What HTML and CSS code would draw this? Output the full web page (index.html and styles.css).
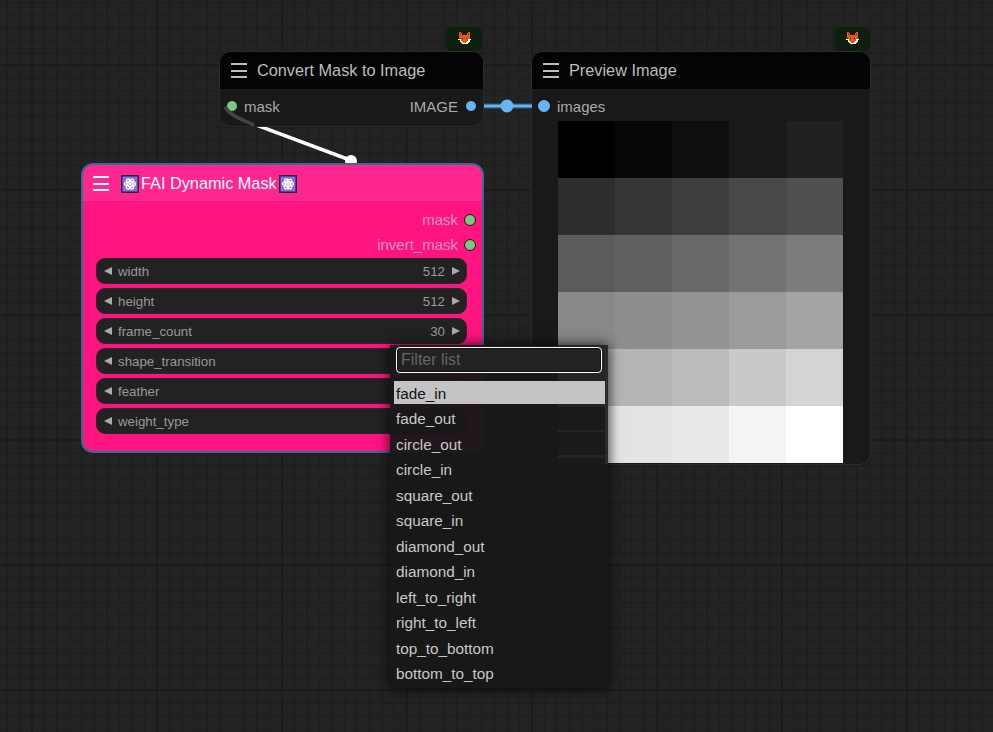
FILE: index.html
```html
<!DOCTYPE html>
<html lang="en">
<head>
<meta charset="utf-8">
<title>Graph</title>
<link rel="stylesheet" href="styles.css">
</head>
<body>
<main class="canvas">
  <svg class="links" width="993" height="732" viewBox="0 0 993 732">
    <path class="link-white" d="M248 122 L350 160"/>
    <circle class="link-dot-white" cx="351" cy="161" r="6"/>
  </svg>

  <div class="badge badge-a"><svg class="fox"><use href="#fox"/></svg></div>
  <div class="badge badge-b"><svg class="fox"><use href="#fox"/></svg></div>

  <section class="node node-convert">
    <header class="node-title"><span class="burger"><i></i><i></i><i></i></span><span>Convert Mask to Image</span></header>
    <div class="slot-row">
      <span class="slot-left"><b class="dot dot-green"></b>mask</span>
      <span class="slot-right">IMAGE<b class="dot dot-blue"></b></span>
    </div>
  </section>

  <section class="node node-preview">
    <header class="node-title"><span class="burger"><i></i><i></i><i></i></span><span>Preview Image</span></header>
    <div class="slot-row">
      <span class="slot-left slot-wide"><b class="dot dot-blue dot-plain"></b>images</span>
    </div>
    <div class="preview-grid">
      <i class="c00"></i><i class="c01"></i><i class="c02"></i><i class="c03"></i><i class="c04"></i>
      <i class="c10"></i><i class="c11"></i><i class="c12"></i><i class="c13"></i><i class="c14"></i>
      <i class="c20"></i><i class="c21"></i><i class="c22"></i><i class="c23"></i><i class="c24"></i>
      <i class="c30"></i><i class="c31"></i><i class="c32"></i><i class="c33"></i><i class="c34"></i>
      <i class="c40"></i><i class="c41"></i><i class="c42"></i><i class="c43"></i><i class="c44"></i>
      <i class="c50"></i><i class="c51"></i><i class="c52"></i><i class="c53"></i><i class="c54"></i>
    </div>
  </section>

  <svg class="links links-over" width="993" height="732" viewBox="0 0 993 732">
    <path class="link-white-dim" d="M225 107 C230 115 238 118 254 125"/>
    <path class="link-blue-halo" d="M484 106 H532"/>
    <path class="link-blue" d="M484 106 H532"/>
    <circle class="link-dot-blue" cx="507" cy="106" r="6.5"/>
  </svg>

  <section class="node node-mask">
    <header class="node-title"><span class="burger"><i></i><i></i><i></i></span><span class="mask-title"><svg class="atom"><use href="#atom"/></svg>FAI Dynamic Mask<svg class="atom"><use href="#atom"/></svg></span></header>
    <div class="outputs">
      <div class="output"><span>mask</span><b class="dot dot-green"></b></div>
      <div class="output"><span>invert_mask</span><b class="dot dot-green"></b></div>
    </div>
    <div class="widgets">
      <div class="widget"><span class="arrow-l"></span><span class="w-name">width</span><span class="w-val">512</span><span class="arrow-r"></span></div>
      <div class="widget"><span class="arrow-l"></span><span class="w-name">height</span><span class="w-val">512</span><span class="arrow-r"></span></div>
      <div class="widget"><span class="arrow-l"></span><span class="w-name">frame_count</span><span class="w-val">30</span><span class="arrow-r"></span></div>
      <div class="widget"><span class="arrow-l"></span><span class="w-name">shape_transition</span></div>
      <div class="widget"><span class="arrow-l"></span><span class="w-name">feather</span></div>
      <div class="widget"><span class="arrow-l"></span><span class="w-name">weight_type</span></div>
    </div>
  </section>

  <aside class="menu">
    <div class="menu-ghost"></div>
    <div class="filter-wrap"><input class="filter" type="text" placeholder="Filter list"></div>
    <ul class="menu-list">
      <li class="selected">fade_in</li>
      <li>fade_out</li>
      <li>circle_out</li>
      <li>circle_in</li>
      <li>square_out</li>
      <li>square_in</li>
      <li>diamond_out</li>
      <li>diamond_in</li>
      <li>left_to_right</li>
      <li>right_to_left</li>
      <li>top_to_bottom</li>
      <li>bottom_to_top</li>
    </ul>
  </aside>

  <svg class="defs" width="0" height="0">
    <symbol id="fox" viewBox="0 0 15 15">
      <path fill="#e8590c" d="M2 1h2v1h1v2h5V2h1V1h2v7h-1v2h-1v1h-1v1H6v-1H5v-1H4V8H3V7H2z"/>
      <path fill="#a83a06" d="M3 2h1v2H3zM11 2h1v2h-1z"/>
      <path fill="#fff" d="M1 8h3v2h1v1h1v1h3v-1h1v-1h1V8h3v1h-1v2h-1v1h-1v1H9v1H6v-1H5v-1H4v-1H3V9H1z"/>
      <path fill="#111" d="M5 7h1v1H5zM9 7h1v1H9z"/>
      <path fill="#222" d="M6 13h3v1H6z"/>
    </symbol>
    <symbol id="atom" viewBox="0 0 18 18">
      <rect x="0.75" y="0.75" width="16.5" height="16.5" fill="#8a6fdc" stroke="#241a3d" stroke-width="1.5"/>
      <g fill="none" stroke="#fff" stroke-width="1.3">
        <ellipse cx="9" cy="9" rx="5.5" ry="2.4"/>
        <ellipse cx="9" cy="9" rx="5.5" ry="2.4" transform="rotate(60 9 9)"/>
        <ellipse cx="9" cy="9" rx="5.5" ry="2.4" transform="rotate(120 9 9)"/>
      </g>
      <circle cx="9" cy="9" r="1.4" fill="#fff"/>
    </symbol>
  </svg>
</main>
</body>
</html>
```

FILE: styles.css
```css
* { box-sizing: border-box; }
html, body { margin: 0; padding: 0; background: #222; }
.canvas {
  position: relative;
  width: 993px;
  height: 732px;
  overflow: hidden;
  font-family: "Liberation Sans", Arial, sans-serif;
  background-color: #232323;
  background-image:
    linear-gradient(to right, #1c1c1c 2px, transparent 2px),
    linear-gradient(to bottom, #1c1c1c 2px, transparent 2px),
    linear-gradient(to right, #1f1f1f 2px, transparent 2px),
    linear-gradient(to bottom, #1f1f1f 2px, transparent 2px);
  background-size: 125px 125px, 125px 125px, 12.5px 12.5px, 12.5px 12.5px;
  background-position: 31px 0, 0 64px, 6px 0, 0 2px;
}
.links { position: absolute; left: 0; top: 0; fill: none; }
.defs { position: absolute; }
.link-white-dim { stroke: #444; stroke-width: 3.5; }
.link-white { stroke: #fff; stroke-width: 3.5; }
.link-dot-white { fill: #fff; }
.link-blue-halo { stroke: #2a3f50; stroke-width: 6; }
.link-blue { stroke: #64b5f6; stroke-width: 3; }
.link-dot-blue { fill: #64b5f6; }

.badge {
  position: absolute;
  top: 27px;
  width: 36px;
  height: 25px;
  background: #0f1f0f;
  border-radius: 7px;
  display: flex;
  justify-content: center;
  padding-top: 4px;
}
.badge-a { left: 446px; }
.badge-b { left: 834px; }
.fox { width: 15px; height: 15px; }

.node {
  position: absolute;
  background: #191919;
  border: 1px solid #2b2b2b;
  border-radius: 12px;
  color: #aaa;
  font-size: 15px;
  overflow: hidden;
}
.node-convert { left: 219px; top: 51px; width: 265px; height: 76px; }
.node-preview { left: 531px; top: 51px; width: 340px; height: 414px; }
.node-mask {
  left: 81px; top: 163px; width: 403px; height: 290px;
  background: #ff1480;
  border: 2px solid #2f6f92;
  border-radius: 12px;
}
.node-title {
  display: flex;
  align-items: center;
  height: 37px;
  background: #040404;
  color: #bdbdbd;
  font-size: 16.3px;
  padding-left: 11px;
  gap: 10px;
}
.node-mask .node-title {
  background: #ff2690;
  color: #fff;
  padding: 1px 0 0 10px;
  border-bottom: 1px solid #e81c7c;
  gap: 12px;
}
.burger { display: flex; flex-direction: column; gap: 4.5px; width: 16px; }
.burger i { display: block; height: 2px; background: currentColor; }
.mask-title { display: flex; align-items: center; gap: 2px; }
.atom { width: 18px; height: 18px; }

.slot-row {
  display: flex;
  justify-content: space-between;
  align-items: center;
  height: 34px;
  padding: 0 6px;
}
.slot-left, .slot-right { display: flex; align-items: center; gap: 6px; }
.slot-right { gap: 7px; }
.slot-wide { gap: 7px; }
.dot {
  display: block;
  width: 12px;
  height: 12px;
  border-radius: 50%;
  border: 1px solid #111;
}
.dot-green { background: #7fc77f; }
.dot-blue { background: #64b5f6; }
.dot-plain { border-color: #64b5f6; }

.preview-grid {
  display: grid;
  grid-template-columns: repeat(5, 57px);
  grid-auto-rows: 57px;
  margin: -2px 0 0 26px;
}
.preview-grid i { display: block; }
.c00 { background: #000; } .c01 { background: #070707; } .c02 { background: #0f0f0f; } .c03 { background: #191919; } .c04 { background: #212121; }
.c10 { background: #2e2e2e; } .c11 { background: #363636; } .c12 { background: #3e3e3e; } .c13 { background: #484848; } .c14 { background: #505050; }
.c20 { background: #5b5b5b; } .c21 { background: #606060; } .c22 { background: #686868; } .c23 { background: #737373; } .c24 { background: #7c7c7c; }
.c30 { background: #888; } .c31 { background: #8d8d8d; } .c32 { background: #939393; } .c33 { background: #9b9b9b; } .c34 { background: #a4a4a4; }
.c40 { background: #aeaeae; } .c41 { background: #b5b5b5; } .c42 { background: #bbb; } .c43 { background: #c9c9c9; } .c44 { background: #d4d4d4; }
.c50 { background: #ddd; } .c51 { background: #e3e3e3; } .c52 { background: #e8e8e8; } .c53 { background: #f4f4f4; } .c54 { background: #fff; }

.outputs { padding: 5px 6px 0 0; }
.output {
  display: flex;
  justify-content: flex-end;
  align-items: center;
  gap: 6px;
  height: 25px;
  color: #dc96ba;
}
.widgets {
  display: flex;
  flex-direction: column;
  gap: 4px;
  padding: 1px 15px 0 13px;
}
.widget {
  display: flex;
  align-items: center;
  height: 26px;
  background: #222;
  border: 1px solid #2a2a2a;
  border-radius: 9px;
  color: #999;
  font-size: 13.3px;
  padding: 0 6px 0 7px;
  gap: 6px;
}
.w-name { flex: 1; }
.w-val { margin-right: 1px; }
.arrow-l { border-style: solid; border-width: 4.5px 8px 4.5px 0; border-color: transparent #aaa transparent transparent; }
.arrow-r { border-style: solid; border-width: 4.5px 0 4.5px 8px; border-color: transparent transparent transparent #aaa; }

.menu {
  position: absolute;
  left: 390px;
  top: 345px;
  width: 218px;
  height: 343px;
  background: rgba(24,24,24,.96);
  box-shadow: 0 0 12px rgba(0,0,0,.8);
  padding: 2px 3px;
  font-size: 15.3px;
  color: #c8c8c8;
}
.menu-ghost {
  position: absolute;
  left: 168px;
  top: 0;
  width: 50px;
  height: 119px;
  background:
    linear-gradient(#2b2b2b, #2b2b2b) 100% 0 / 3px 100% no-repeat,
    linear-gradient(#252525, #252525) 0 0 / 100% 62px no-repeat,
    linear-gradient(#252525, #252525) 0 85px / 100% 2px no-repeat,
    linear-gradient(#252525, #252525) 0 110px / 100% 3px no-repeat,
    #1a1a1a;
}
.filter-wrap { position: relative; padding: 0 3px; }
.filter {
  display: block;
  width: 100%;
  height: 26px;
  background: #222;
  border: 1px solid #fff;
  box-shadow: inset 0 0 0 1px #111;
  border-radius: 4px;
  color: #ccc;
  font: 16px "Liberation Sans", Arial, sans-serif;
  padding: 0 4px;
  outline: none;
}
.filter::placeholder { color: #666; }
.menu-list { position: relative; list-style: none; margin: 8px 0 0 1px; padding: 0; }
.menu-list li { height: 25.5px; line-height: 26px; padding-left: 2px; white-space: nowrap; }
.menu-list li.selected { background: #c4c4c4; color: #111; height: 23px; line-height: 25px; margin-bottom: 2px; }
```
